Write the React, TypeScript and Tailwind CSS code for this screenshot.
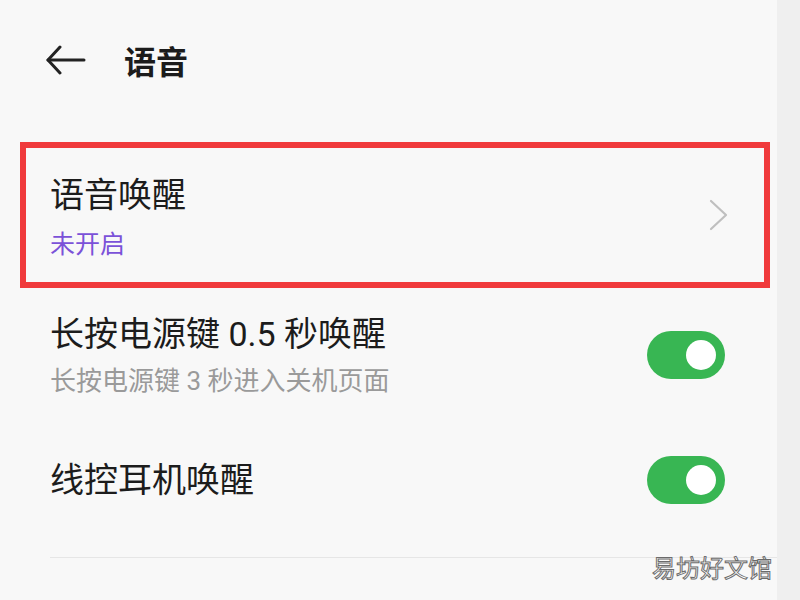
import { ReactNode } from 'react';

const Toggle = () => (
  <div className="w-[78px] h-[48px] rounded-full bg-[#38b653] flex items-center justify-end pr-[9px] shrink-0">
    <div className="w-[30px] h-[30px] rounded-full bg-white" />
  </div>
);

const BackArrow = () => (
  <svg width="40" height="30" viewBox="0 0 40 30" fill="none" stroke="#222" strokeWidth="3" strokeLinecap="round" strokeLinejoin="round">
    <path d="M38 15H2" />
    <path d="M14 2L2 15l12 13" />
  </svg>
);

const Chevron = () => (
  <svg width="19" height="32" viewBox="0 0 19 32" fill="none" stroke="#bfbfbf" strokeWidth="2.2" strokeLinecap="round" strokeLinejoin="round">
    <path d="M2 2l15 14L2 30" />
  </svg>
);

const Row = ({ title, sub, right }: { title: string; sub?: ReactNode; right: ReactNode }) => (
  <div className="flex items-center justify-between pl-[50px] pr-[52px]">
    <div className="flex flex-col">
      <span className="text-[34px] leading-[44px] text-[#1c1c1c] font-['Roboto','Noto_Sans_CJK_SC',sans-serif]">{title}</span>
      {sub}
    </div>
    {right}
  </div>
);

export default function App() {
  return (
    <div className="relative w-[800px] h-[600px] flex bg-[#f8f8f8] font-['Noto_Sans_CJK_SC','Noto_Sans',sans-serif] overflow-hidden">
      <div className="flex-1 flex flex-col">
        {/* header */}
        <div className="flex items-center pt-[40px] pl-[46px] h-[80px]">
          <BackArrow />
          <span className="ml-[38px] text-[32px] leading-[40px] font-bold text-[#1c1c1c]">语音</span>
        </div>

        {/* highlighted row */}
        <div className="mt-[62px] ml-[20px] w-[750px] h-[146px] border-[6px] border-[#f03a3c] flex items-center justify-between pl-[24px] pr-[36px]">
          <div className="flex flex-col">
            <span className="text-[34px] leading-[40px] text-[#1c1c1c]">语音唤醒</span>
            <span className="mt-[13px] text-[25px] leading-[32px] text-[#7b52d8]">未开启</span>
          </div>
          <Chevron />
        </div>

        <div className="mt-[24px]">
          <Row
            title="长按电源键 0.5 秒唤醒"
            sub={
              <span className="mt-[9px] text-[26px] leading-[32px] text-[#9a9a9a] font-['Roboto','Noto_Sans_CJK_SC',sans-serif]">
                长按电源键 3 秒进入关机页面
              </span>
            }
            right={<Toggle />}
          />
        </div>

        <div className="mt-[43px] h-[80px] flex flex-col justify-center">
          <Row title="线控耳机唤醒" right={<Toggle />} />
        </div>

        <div className="mt-[37px] ml-[50px] h-px bg-[#e6e6e6]" />
      </div>
      <div className="w-[23px] bg-[#efefef]" />

      <span className="absolute right-[28px] top-[555px] text-[24px] leading-[24px] text-white [-webkit-text-stroke:1px_#6b6b6b]">
        易坊好文馆
      </span>
    </div>
  );
}
